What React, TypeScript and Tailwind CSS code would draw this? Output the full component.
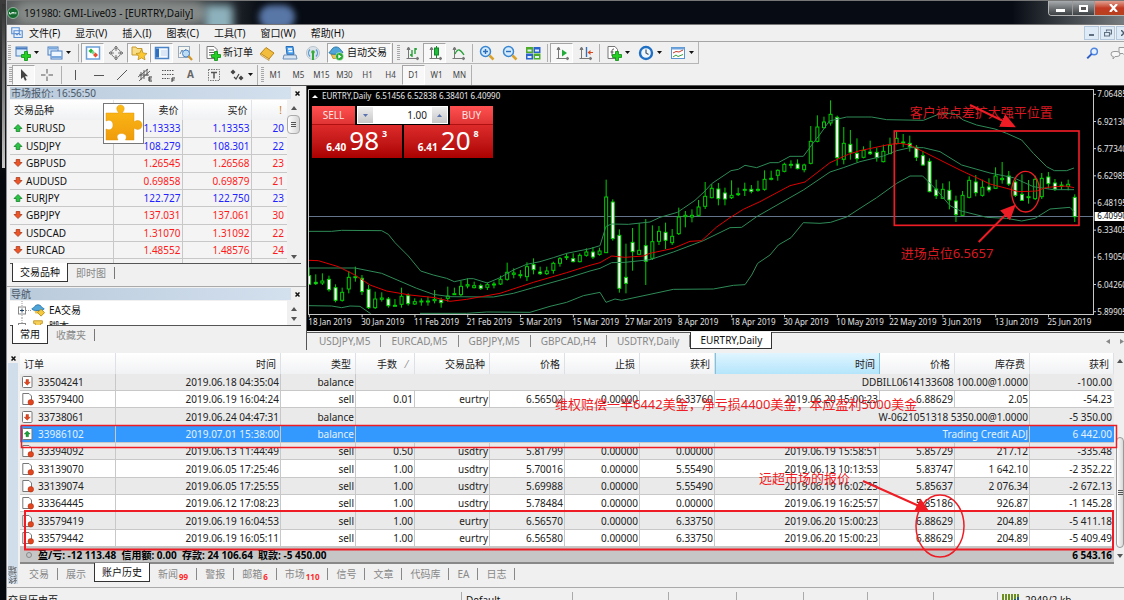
import React from 'react';
import clsx from 'clsx';

/* ---------- data ---------- */

const menuItems = ['文件(F)', '显示(V)', '插入(I)', '图表(C)', '工具(T)', '窗口(W)', '帮助(H)'];
const timeframes = ['M1', 'M5', 'M15', 'M30', 'H1', 'H4', 'D1', 'W1', 'MN'];
const chartTabs = ['USDJPY,M5', 'EURCAD,M5', 'GBPJPY,M5', 'GBPCAD,H4', 'USDTRY,Daily', 'EURTRY,Daily'];

const quotes = [
  { symbol: 'EURUSD', bid: '1.13333', ask: '1.13353', spread: 20, up: true },
  { symbol: 'USDJPY', bid: '108.279', ask: '108.301', spread: 22, up: true },
  { symbol: 'GBPUSD', bid: '1.26545', ask: '1.26568', spread: 23, up: false },
  { symbol: 'AUDUSD', bid: '0.69858', ask: '0.69879', spread: 21, up: false },
  { symbol: 'EURJPY', bid: '122.727', ask: '122.750', spread: 23, up: true },
  { symbol: 'GBPJPY', bid: '137.031', ask: '137.061', spread: 30, up: false },
  { symbol: 'USDCAD', bid: '1.31070', ask: '1.31092', spread: 22, up: false },
  { symbol: 'EURCAD', bid: '1.48552', ask: '1.48576', spread: 24, up: false },
];

type Order = {
  id: string;
  time: string;
  type: string;
  comment?: string;
  cells?: string[];
  profit: string;
  icon: 'out' | 'in' | 'sell';
};

const orders: Order[] = [
  { id: '33504241', time: '2019.06.18 04:35:04', type: 'balance', comment: 'DDBILL0614133608 100.00@1.0000', profit: '-100.00', icon: 'out' },
  { id: '33579400', time: '2019.06.19 16:04:24', type: 'sell', cells: ['0.01', 'eurtry', '6.56502', '0.00000', '6.33760', '2019.06.20 15:00:23', '6.88629', '2.05'], profit: '-54.23', icon: 'sell' },
  { id: '33738061', time: '2019.06.24 04:47:31', type: 'balance', comment: 'W-0621051318 5350.00@1.0000', profit: '-5 350.00', icon: 'out' },
  { id: '33986102', time: '2019.07.01 15:38:00', type: 'balance', comment: 'Trading Credit ADJ', profit: '6 442.00', icon: 'in' },
  { id: '33394092', time: '2019.06.13 11:44:49', type: 'sell', cells: ['0.50', 'usdtry', '5.81799', '0.00000', '0.00000', '2019.06.19 15:58:51', '5.85729', '217.12'], profit: '-335.48', icon: 'sell' },
  { id: '33139070', time: '2019.06.05 17:25:46', type: 'sell', cells: ['1.00', 'usdtry', '5.70016', '0.00000', '5.55490', '2019.06.13 10:13:53', '5.83747', '1 642.10'], profit: '-2 352.22', icon: 'sell' },
  { id: '33139074', time: '2019.06.05 17:25:55', type: 'sell', cells: ['1.00', 'usdtry', '5.69988', '0.00000', '5.55490', '2019.06.19 16:02:25', '5.85637', '2 076.34'], profit: '-2 672.13', icon: 'sell' },
  { id: '33364445', time: '2019.06.12 17:08:23', type: 'sell', cells: ['1.00', 'usdtry', '5.78484', '0.00000', '0.00000', '2019.06.19 16:25:57', '5.85186', '926.87'], profit: '-1 145.28', icon: 'sell' },
  { id: '33579419', time: '2019.06.19 16:04:53', type: 'sell', cells: ['1.00', 'eurtry', '6.56570', '0.00000', '6.33750', '2019.06.20 15:00:23', '6.88629', '204.89'], profit: '-5 411.18', icon: 'sell' },
  { id: '33579442', time: '2019.06.19 16:05:11', type: 'sell', cells: ['1.00', 'eurtry', '6.56580', '0.00000', '6.33750', '2019.06.20 15:00:23', '6.88629', '204.89'], profit: '-5 409.49', icon: 'sell' },
];

const terminalTabs = [
  { label: '交易' },
  { label: '展示' },
  { label: '账户历史', active: true },
  { label: '新闻', badge: '99' },
  { label: '警报' },
  { label: '邮箱', badge: '6' },
  { label: '市场', badge: '110' },
  { label: '信号' },
  { label: '文章' },
  { label: '代码库' },
  { label: 'EA' },
  { label: '日志' },
];

// high, low, body top, body bottom, bearish (chart units, 3 per pixel)
const candles: number[][] = [
  [548, 600, 572, 598, 1], [568, 600, 592, 596, 1], [565, 600, 588, 594, 0], [572, 620, 583, 614, 1],
  [598, 652, 608, 646, 1], [608, 650, 622, 646, 0], [558, 625, 577, 612, 0], [545, 590, 575, 578, 0],
  [570, 630, 580, 620, 1], [600, 672, 613, 668, 1], [620, 672, 642, 668, 0], [622, 650, 639, 643, 0],
  [636, 668, 642, 662, 1], [642, 665, 661, 664, 0], [608, 668, 634, 658, 0], [625, 662, 632, 656, 1],
  [640, 660, 650, 657, 0], [640, 662, 648, 651, 0], [635, 662, 648, 651, 0], [615, 655, 643, 647, 0],
  [638, 668, 645, 653, 1], [605, 650, 633, 640, 0], [608, 630, 626, 629, 0], [588, 634, 604, 629, 0],
  [580, 610, 599, 603, 0], [590, 610, 602, 608, 0], [596, 615, 602, 610, 1], [592, 615, 599, 607, 0],
  [590, 610, 597, 600, 0], [572, 600, 583, 597, 0], [533, 587, 562, 583, 0], [550, 580, 564, 568, 0],
  [555, 580, 569, 572, 0], [532, 588, 545, 575, 0], [520, 568, 539, 554, 1], [545, 570, 561, 566, 1],
  [545, 570, 558, 566, 0], [530, 566, 535, 556, 0], [516, 545, 521, 535, 0], [505, 525, 515, 518, 0],
  [505, 532, 521, 530, 1], [505, 532, 511, 530, 0], [490, 515, 501, 511, 0], [486, 522, 501, 516, 1],
  [488, 512, 498, 508, 0], [284, 504, 336, 503, 0], [343, 467, 351, 461, 1], [433, 623, 451, 610, 1],
  [476, 625, 577, 595, 1], [429, 557, 472, 500, 1], [415, 510, 496, 508, 0], [402, 600, 482, 529, 1],
  [421, 525, 470, 520, 0], [423, 480, 439, 469, 0], [413, 492, 442, 466, 1], [432, 480, 454, 473, 0],
  [368, 450, 396, 446, 0], [378, 427, 391, 395, 0], [373, 412, 391, 396, 0], [345, 395, 366, 391, 0],
  [291, 372, 334, 364, 0], [297, 340, 310, 338, 0], [294, 361, 312, 341, 1], [308, 361, 324, 342, 1],
  [286, 342, 331, 338, 0], [308, 333, 326, 329, 0], [293, 333, 313, 316, 0], [300, 325, 313, 319, 1],
  [287, 320, 313, 316, 0], [256, 317, 283, 313, 0], [257, 286, 280, 283, 0], [253, 287, 256, 271, 0],
  [233, 262, 238, 259, 0], [226, 250, 238, 241, 0], [223, 253, 237, 251, 1], [236, 262, 240, 254, 0],
  [123, 238, 169, 235, 0], [91, 172, 126, 169, 0], [95, 130, 111, 128, 0], [46, 122, 88, 114, 0],
  [92, 242, 97, 218, 1], [126, 238, 175, 223, 0], [135, 224, 178, 202, 1], [160, 232, 205, 221, 1],
  [184, 220, 196, 217, 0], [167, 210, 201, 206, 1], [188, 230, 202, 218, 1], [179, 232, 199, 230, 0],
  [158, 206, 181, 206, 0], [140, 178, 160, 176, 0], [147, 187, 171, 174, 0], [152, 200, 175, 185, 1],
  [180, 228, 187, 217, 1], [198, 243, 212, 240, 1], [220, 322, 229, 320, 1], [284, 342, 312, 332, 1],
  [295, 342, 313, 340, 0], [289, 373, 316, 345, 1], [332, 411, 348, 389, 1], [318, 393, 331, 391, 0],
  [274, 340, 286, 337, 0], [270, 334, 291, 323, 1], [284, 335, 307, 331, 0], [280, 322, 306, 315, 1],
  [247, 312, 273, 310, 0], [231, 296, 280, 284, 0], [258, 303, 273, 297, 1], [284, 336, 291, 331, 1],
  [268, 348, 328, 346, 1], [285, 356, 335, 338, 0], [272, 345, 283, 341, 0], [264, 342, 280, 335, 0],
  [261, 310, 276, 296, 1], [282, 318, 294, 312, 1], [290, 314, 300, 303, 0], [284, 316, 298, 304, 0],
  [328, 411, 337, 395, 1],
];

const upperBand =
  '27,439 95,439 125,436 245,437 265,448 285,473 325,513 362,558 400,570 440,580 463,590 505,581 520,581 562,594 600,578 640,555 680,538 720,530 760,518 800,505 870,491 900,482 918,424 935,417 985,418 1050,411 1080,397 1132,382 1150,370 1185,346 1215,318 1235,296 1293,257 1315,253 1335,241 1370,248 1410,233 1435,233 1470,214 1510,214 1535,180 1560,148 1588,108 1640,96 1715,96 1760,104 1870,106 1915,88 1960,84 1990,105 2030,120 2085,132 2120,145 2165,165 2200,205 2240,245 2263,257 2300,257 2322,249';
const middleBand =
  '27,549 165,549 245,565 350,610 400,628 450,635 580,636 640,625 700,608 800,580 870,558 900,550 935,533 975,532 1050,524 1120,501 1210,467 1290,428 1325,427 1370,395 1510,315 1590,261 1630,248 1680,230 1750,213 1790,197 1830,188 1870,188 1920,200 1985,240 2070,264 2140,278 2200,305 2260,314 2322,314';
const lowerBandLeft = '27,662 95,663 125,668 150,663 180,664 212,686';
const lowerBand =
  '360,685 500,685 560,681 690,682 750,664 800,652 850,632 900,622 918,652 945,642 965,646 1050,628 1120,613 1240,612 1300,601 1335,599 1355,570 1373,535 1410,510 1435,480 1473,458 1510,413 1560,415 1592,412 1640,396 1680,370 1730,338 1790,295 1830,273 1868,273 1910,315 1950,362 1980,377 2060,397 2120,400 2165,408 2205,400 2250,372 2310,367 2322,380';
const movingAverage =
  '27,526 55,527 115,545 165,570 210,600 260,618 330,630 405,638 450,649 500,643 600,625 700,592 800,563 870,541 900,533 935,513 975,517 1030,513 1050,505 1120,490 1170,469 1205,467 1250,426 1290,398 1330,373 1380,350 1470,302 1515,291 1590,233 1645,208 1680,197 1770,178 1800,175 1830,180 1880,205 1980,255 2070,297 2120,310 2155,320 2210,318 2240,307 2300,303 2322,308';

const priceLabels = ['7.06485', '6.92130', '6.77340', '6.62985', '6.48195', '6.33405', '6.19050', '6.04260', '5.89905'];
const dateLabels = [
  '18 Jan 2019', '30 Jan 2019', '11 Feb 2019', '21 Feb 2019', '5 Mar 2019', '15 Mar 2019', '27 Mar 2019', '8 Apr 2019',
  '18 Apr 2019', '30 Apr 2019', '10 May 2019', '22 May 2019', '3 Jun 2019', '13 Jun 2019', '25 Jun 2019',
];

/* ---------- small parts ---------- */

const Glyph = ({ children, size = 16 }: { children: React.ReactNode; size?: number }) => (
  <svg width={size} height={size} viewBox="0 0 16 16" fill="none" aria-hidden="true" className="shrink-0">
    {children}
  </svg>
);

const ToolButton = ({ label, pressed, children }: { label: string; pressed?: boolean; children: React.ReactNode }) => (
  <button
    type="button"
    aria-label={label}
    className={clsx(
      'flex h-5 w-[23px] shrink-0 items-center justify-center border text-[8px] text-[#444]',
      pressed ? 'border-t-[#a5a5a5] border-l-[#a5a5a5] border-r-white border-b-white bg-[#f8f8f8]' : 'border-transparent',
    )}
  >
    {children}
  </button>
);

const Caret = () => (
  <span className="flex h-5 w-[9px] shrink-0 items-center">
    <svg width="5" height="3" viewBox="0 0 5 3"><path d="M0 0h5L2.5 3z" fill="#111" /></svg>
  </span>
);

const Separator = () => (
  <span className="flex w-[6px] shrink-0 justify-center"><span className="h-[18px] w-px bg-[#b0b0b0]" /></span>
);

const Grip = () => (
  <span className="flex w-1 shrink-0 justify-center">
    <svg width="3" height="16" viewBox="0 0 3 16">
      <path d="M1.5 0v16" stroke="#a8a8a8" strokeWidth="3" strokeDasharray="1 1" />
    </svg>
  </span>
);

const Plus = () => <path d="M9.500 6.500h3v3h3v3h-3v3h-3v-3h-3v-3h3z" fill="#22cf22" stroke="#0a8a12" strokeWidth=".8" />;
const Axes = () => <path d="M4.500 3v10.500M2.500 13.500h12M4.500 2l-1.500 2.500h3zM15 13.500l-2-1.500v3z" stroke="#777" strokeWidth="1" fill="#777" />;

const ArrowMark = ({ up }: { up: boolean }) => (
  <svg width="10" height="10" viewBox="0 0 10 10" aria-hidden="true" className="shrink-0">
    {up ? (
      <path d="M5 1.500l4 4H6.800V8.500H3.200V5.500H1z" fill="#2cc444" stroke="#15802a" strokeWidth=".8" />
    ) : (
      <path d="M5 8.500L1 4.500h2.200V1.500h3.600V4.500H9z" fill="#ee5426" stroke="#a83a1a" strokeWidth=".8" />
    )}
  </svg>
);

const OrderIcon = ({ kind }: { kind: Order['icon'] }) => (
  <svg width="12" height="14" viewBox="0 0 12 14" aria-hidden="true" className="shrink-0">
    {kind === 'sell' ? (
      <>
        <path d="M.8 1.500h6.200l2.500 2.500v8.500H.8z" fill="#fff" stroke="#777" />
        <circle cx="8.800" cy="10.300" r="2.800" fill="#e2441d" stroke="#a52c10" strokeWidth=".5" />
      </>
    ) : (
      <>
        <rect x=".5" y="1.500" width="9.500" height="11" rx="1" fill="#fff" stroke="#777" />
        {kind === 'out' ? (
          <path d="M5.200 10.200L2.200 7.200H4V4.500h2.500v2.700h1.800z" fill="#e2441d" stroke="#982c10" strokeWidth=".4" />
        ) : (
          <path d="M5.200 4l3 3H6.500v2.700H4V7H2.200z" fill="#1ca03a" stroke="#0e6a22" strokeWidth=".4" />
        )}
      </>
    )}
  </svg>
);

const CloseMark = () => (
  <svg width="5" height="5" viewBox="0 0 5 5"><path d="M.5.5l4 4M4.500.5l-4 4" stroke="#111" strokeWidth="1.500" /></svg>
);

const PaneTitle = ({ children }: { children: React.ReactNode }) => (
  <div className="flex h-[14px] items-center pr-[3px] pl-[3px]">
    <h2 className="h-3 flex-1 bg-gradient-to-r from-[#b9cadb] to-[#d3e0ee] px-px text-[10px] leading-3 text-[#4a5766]">{children}</h2>
    <button type="button" aria-label="关闭" className="flex h-3 w-3 items-center justify-center"><CloseMark /></button>
  </div>
);

const ScrollArrow = ({ down }: { down?: boolean }) => (
  <svg width="6" height="4" viewBox="0 0 6 4" className="mx-auto block"><path d={down ? 'M0 0h6L3 4z' : 'M0 4h6L3 0z'} fill="#555" /></svg>
);

/* ---------- window chrome ---------- */

const TitleBar = () => (
  <header className="relative flex h-[25px] shrink-0 items-center overflow-hidden border-t border-b border-t-[#777] border-b-[#777] bg-[#070c14]">
    <span className="absolute top-0 left-0 h-6 w-64 bg-gradient-to-r from-[#5c6060] from-60% to-transparent" />
    <span className="absolute top-0 left-2 h-6 w-48 rounded-full bg-[#868b89] blur-[5px]" />
    <span className="absolute top-1 left-[198px] h-7 w-7 rounded bg-[#8eb2bd] blur-[4px]" />
    <span className="absolute top-1 left-[252px] h-6 w-9 rounded-full bg-[#5876a6] blur-[3px]" />
    <span className="absolute top-0 right-0 h-6 w-28 bg-gradient-to-r from-transparent to-[#777c80]" />
    <svg width="12" height="12" viewBox="0 0 12 12" className="relative shrink-0">
      <circle cx="6" cy="6" r="5.500" fill="#14692f" stroke="#b9d6bf" strokeWidth=".7" />
      <path d="M2.500 5v2h1.500V6M5 7.200V5l1 1.200L7 5v2.200M8.800 5v2.200" stroke="#fff" strokeWidth=".8" fill="none" />
    </svg>
    <h1 className="relative ml-[5px] text-[10px] leading-4 text-[#0c0c0c]">191980: GMI-Live03 - [EURTRY,Daily]</h1>
    <div className="absolute top-0 right-0 flex h-[15px] overflow-hidden rounded-bl border-b border-l border-[#b5b5b5]">
      <button type="button" aria-label="最小化" className="flex w-6 items-end justify-center border-r border-[#999] bg-gradient-to-b from-[#a9acae] to-[#3e4144] pb-[3px]">
        <span className="h-[3px] w-[9px] bg-white" />
      </button>
      <button type="button" aria-label="最大化" className="flex w-[22px] items-center justify-center border-r border-[#999] bg-gradient-to-b from-[#a9acae] to-[#3e4144]">
        <span className="h-[7px] w-[9px] border-2 border-white bg-[#555]" />
      </button>
      <button type="button" aria-label="关闭窗口" className="flex w-[29px] items-center justify-center bg-gradient-to-b from-[#e0a092] via-[#c23a22] to-[#b8401f] pl-2">
        <svg width="9" height="8" viewBox="0 0 9 8"><path d="M1 0l7 8M8 0L1 8" stroke="#fff" strokeWidth="2.200" /></svg>
      </button>
    </div>
  </header>
);

const MenuBar = () => (
  <nav className="flex h-[17px] shrink-0 items-center border-b border-[#a5a5a5] bg-[#f0f0f0] pl-1 text-[10px] text-[#111]">
    <Glyph size={12}>
      <path d="M1 1h10v8H1zM4 5h11v9H4z" fill="#e8f2ff" stroke="#5a8fd0" strokeWidth="1.500" />
      <path d="M6 8l2 3 2-3 2 3 1-2" stroke="#4a7ac0" />
    </Glyph>
    <ul className="ml-[6px] flex gap-[15px]">
      {menuItems.map((item) => (
        <li key={item}><button type="button" className="block leading-4">{item}</button></li>
      ))}
    </ul>
    <div className="ml-auto flex text-[#4b5b6b]">
      <button type="button" aria-label="最小化图表" className="mr-px flex h-[14px] w-[15px] items-end justify-center border border-[#b3c8dc] bg-[#deebf7] pb-[3px]">
        <span className="h-0.5 w-[5px] bg-[#5f6f80]" />
      </button>
      <button type="button" aria-label="还原图表" className="mr-px flex h-[14px] w-[15px] items-center justify-center border border-[#b3c8dc] bg-[#deebf7]">
        <svg width="8" height="8" viewBox="0 0 8 8" fill="none" stroke="#5f6f80"><path d="M2.500 2.500v-1.500h5v4H6M.5 3.500h5v3.500h-5z" strokeWidth="1.200" /></svg>
      </button>
      <button type="button" aria-label="关闭图表" className="flex h-[14px] w-2 items-center overflow-hidden border border-r-0 border-[#b3c8dc] bg-[#deebf7] pl-1">
        <svg width="6" height="6" viewBox="0 0 6 6" className="shrink-0"><path d="M0 0l6 6M6 0L0 6" stroke="#4b5b6b" strokeWidth="1.500" /></svg>
      </button>
    </div>
  </nav>
);

const MainToolbar = () => (
  <div className="flex h-[22px] shrink-0 items-center bg-[#f0f0f0]">
    <div className="flex h-[22px] items-center border-b border-r border-[#b5b5b5]">
      <Grip />
      <ToolButton label="新图表">
        <Glyph><rect x="1" y="2" width="11" height="9" fill="#dcebfa" stroke="#4a7ec0" /><path d="M1 3.500h11" stroke="#4a7ec0" strokeWidth="2" /><Plus /></Glyph>
      </ToolButton>
      <Caret />
      <ToolButton label="配置文件">
        <Glyph><rect x="1" y="2" width="10" height="8" fill="#dcebfa" stroke="#4a7ec0" /><rect x="4" y="6" width="11" height="8" fill="#eef6ff" stroke="#4a7ec0" /><path d="M2 3.500h8M4 12h11" stroke="#7aa8dd" strokeWidth="2" /></Glyph>
      </ToolButton>
      <Caret />
      <Separator />
      <ToolButton label="市场报价" pressed>
        <Glyph><rect x="1.500" y="2" width="13" height="12" fill="#fff" stroke="#6a9fd8" strokeWidth="1.500" /><path d="M6 3.500l2.500 2.500L6 8.500 3.500 6z" fill="#20b838" /><path d="M8 5.500l2 2-2 2-2-2z" fill="#7fd08a" /><path d="M10.500 7.500L13 10l-2.500 2.500L8 10z" fill="#e94b2b" /></Glyph>
      </ToolButton>
      <ToolButton label="数据窗口">
        <Glyph><circle cx="8" cy="8" r="4.500" stroke="#777" /><path d="M8 1v5M8 10v5M1 8h5M10 8h5M6.500 3L8 1l1.500 2M6.500 13L8 15l1.500-2M3 6.500L1 8l2 1.500M13 6.500L15 8l-2 1.500" stroke="#777" /></Glyph>
      </ToolButton>
      <ToolButton label="导航" pressed>
        <Glyph><path d="M1 2h4l1 1.500h5V10H1z" fill="#f8dd84" stroke="#c99a2e" /><path d="M10.500 4.500l1.700 3.500 3.800.5-2.800 2.600.8 3.700-3.500-1.900L7 14.800l.8-3.700L5 8.500 8.800 8z" fill="#fbc832" stroke="#b98612" strokeWidth=".7" /></Glyph>
      </ToolButton>
      <ToolButton label="终端" pressed>
        <Glyph><rect x="1.500" y="2.500" width="13" height="11" fill="#f4f9ff" stroke="#4a84c8" strokeWidth="1.500" /><path d="M2 3.500h3v9H2z" fill="#2f6fc0" /><path d="M7 6h6M7 8h6M7 10h6" stroke="#c0d4ec" /></Glyph>
      </ToolButton>
      <ToolButton label="策略测试">
        <Glyph><rect x="1.500" y="1.500" width="11" height="11" fill="#f4f4f0" stroke="#9ab" /><path d="M3 9l2-4 2 3 2-4" stroke="#68a" /><circle cx="9" cy="8.500" r="3.500" fill="#bcdcf4" stroke="#4a84c8" /><path d="M11.500 11l3.500 4" stroke="#d2962a" strokeWidth="2.200" /></Glyph>
      </ToolButton>
      <Separator />
      <button type="button" className="flex h-5 w-[53px] shrink-0 items-center gap-[2px] pl-[3px] text-[10px] whitespace-nowrap text-[#111]">
        <Glyph><path d="M2 1.500h7l3 3v9H2z" fill="#fff" stroke="#777" /><path d="M4 5h5M4 7.500h5M4 10h3" stroke="#666" /><Plus /></Glyph>
        新订单
      </button>
      <ToolButton label="编辑器">
        <Glyph><path d="M1.500 8.500L7 2.500l8 5.500-5 6z" fill="#f2bc3c" stroke="#b8841c" /><path d="M1.500 8.500l8.500 5.500v1.500L1.500 10z" fill="#fbe6a8" stroke="#b8841c" strokeWidth=".7" /></Glyph>
      </ToolButton>
      <ToolButton label="全屏">
        <Glyph><path d="M4 1.500h7l1 8H5z" fill="#4ba2ec" stroke="#2a6cb8" /><path d="M6 4h4M6.500 6.500h4" stroke="#fff" strokeWidth="1.300" /><path d="M2 10h12l1 4H1z" fill="#d7e4f2" stroke="#6a8fb8" /></Glyph>
      </ToolButton>
      <ToolButton label="信号">
        <Glyph><circle cx="8" cy="8" r="6.500" fill="#dbe3e8" stroke="#b8c4cc" /><path d="M5 4.500a5 5 0 000 7M11 4.500a5 5 0 010 7" stroke="#5a9bd4" strokeWidth="1.300" /><path d="M8 6v9" stroke="#35ab3c" strokeWidth="2" /><circle cx="8" cy="7" r="1.800" fill="#35ab3c" /></Glyph>
      </ToolButton>
      <button type="button" className="ml-[3px] flex h-5 w-16 shrink-0 items-center gap-[3px] border border-t-[#a5a5a5] border-l-[#a5a5a5] border-r-white border-b-white bg-[#f8f8f8] text-[10px] whitespace-nowrap text-[#111]">
        <Glyph><path d="M3 9h9l-1 4.500H5z" fill="#eec24c" stroke="#a98220" strokeWidth=".7" /><path d="M1 7.500C3 7 3.500 2 8 2s5 4.500 7 5c0 3-14 3-14 .5z" fill="#4fa4d8" stroke="#2a75a8" /><circle cx="11.500" cy="11.500" r="4" fill="#25ab30" stroke="#fff" strokeWidth=".5" /><path d="M10.300 9.500l3.200 2-3.200 2z" fill="#fff" /></Glyph>
        自动交易
      </button>
      <span className="ml-px mr-[3px] h-5 w-px bg-[#a0a0a0]" />
      <Grip />
      <ToolButton label="柱状图"><Glyph><Axes /><path d="M8 5v7M6 10h2M11 3v6M11 4h2" stroke="#1a9a2a" strokeWidth="1.300" /></Glyph></ToolButton>
      <ToolButton label="蜡烛图" pressed><Glyph><Axes /><path d="M9.500 1v12" stroke="#12852a" /><rect x="7.500" y="3" width="4" height="7" fill="#22ba3a" stroke="#12852a" /></Glyph></ToolButton>
      <ToolButton label="折线图"><Glyph><Axes /><path d="M5 9c3-6 5-5 9 1" stroke="#2aa03a" strokeWidth="1.300" /></Glyph></ToolButton>
      <Separator />
      <ToolButton label="放大"><Glyph><circle cx="6.500" cy="6.500" r="5" fill="#d4ebff" stroke="#3b86d0" strokeWidth="1.500" /><path d="M4 6.500h5M6.500 4v5" stroke="#2c6cb8" strokeWidth="1.400" /><path d="M10.500 10.500l4 4" stroke="#d9a22c" strokeWidth="2.500" /></Glyph></ToolButton>
      <ToolButton label="缩小"><Glyph><circle cx="6.500" cy="6.500" r="5" fill="#d4ebff" stroke="#3b86d0" strokeWidth="1.500" /><path d="M4 6.500h5" stroke="#2c6cb8" strokeWidth="1.400" /><path d="M10.500 10.500l4 4" stroke="#d9a22c" strokeWidth="2.500" /></Glyph></ToolButton>
      <ToolButton label="平铺窗口">
        <Glyph><rect x="1" y="2" width="7" height="6" fill="#4cab28" /><rect x="8.500" y="2" width="7" height="6" fill="#2c62cc" /><rect x="1" y="8.500" width="7" height="6" fill="#2c62cc" /><rect x="8.500" y="8.500" width="7" height="6" fill="#4cab28" /><path d="M2.500 5.500h4M10 5.500h4M2.500 12h4M10 12h4" stroke="#e4f0ff" strokeWidth="2" /></Glyph>
      </ToolButton>
      <Separator />
      <ToolButton label="自动滚动" pressed><Glyph><Axes /><path d="M8 4.500l5 3.500-5 3.500z" fill="#22ab38" /></Glyph></ToolButton>
      <ToolButton label="图表平移"><Glyph><Axes /><path d="M9.500 2v10" stroke="#336fb8" strokeWidth="1.400" /><path d="M10.500 7.500l3-2.500v5z" fill="#d8481e" /><path d="M13 7.500h3" stroke="#d8481e" /></Glyph></ToolButton>
      <Separator />
      <ToolButton label="指标"><Glyph><path d="M2 1.500h7l2.500 3v9H2z" fill="#fff" stroke="#777" /><path d="M8 4c-2 0-2 1-2 3v4M4.500 7h3" stroke="#555" /><Plus /></Glyph></ToolButton>
      <Caret />
      <ToolButton label="周期"><Glyph><circle cx="8" cy="8" r="6" fill="#eef6ff" stroke="#1f6fc4" strokeWidth="2.400" /><path d="M8 4.500V8l2.500 1.500" stroke="#456" strokeWidth="1.200" /></Glyph></ToolButton>
      <Caret />
      <ToolButton label="模板"><Glyph><rect x="1.500" y="2.500" width="13" height="11" fill="#fff" stroke="#5a94d0" /><path d="M1.500 3.500h13" stroke="#6fa4dc" strokeWidth="2" /><path d="M3 8l3-1.500 3 .5 4-2" stroke="#c33a2a" /><path d="M3 12l3-2 2 1.500 5-2" stroke="#35a03a" /></Glyph></ToolButton>
      <Caret />
    </div>
    <div className="ml-auto flex items-center gap-[11px]">
      <button type="button" aria-label="搜索"><Glyph size={13}><circle cx="10" cy="5.500" r="4" fill="#e6f0ff" stroke="#4f86e0" strokeWidth="1.800" /><path d="M7 8.500L1.500 14" stroke="#2f5fc4" strokeWidth="2.500" /></Glyph></button>
      <button type="button" aria-label="聊天" className="w-[14px] overflow-hidden">
        <svg width="20" height="14" viewBox="0 0 20 14" fill="#f7f7f7" stroke="#999"><path d="M9 1.500h8q3 0 3 3t-3 3h-2l1 3-3-3H9z" /><path d="M4 5.500h3q3 0 3 2.500t-3 2.500H5l-2 2.500.3-2.500Q1 10.500 1 8t3-2.500z" /></svg>
      </button>
    </div>
  </div>
);

const DrawingToolbar = () => (
  <div className="flex h-[22px] shrink-0 items-center border-b border-[#555] bg-[#f0f0f0] pl-px">
    <Grip />
    <ToolButton label="光标" pressed><Glyph><path d="M5 2v10l2.300-2 1.700 3.700 1.700-.8L9 9.200h3z" fill="#444" /></Glyph></ToolButton>
    <ToolButton label="十字准线"><Glyph><path d="M8 2v4.500M8 9.500V14M2 8h4.500M9.500 8H14" stroke="#555" /></Glyph></ToolButton>
    <Separator />
    <ToolButton label="垂直线"><Glyph><path d="M7.500 3v10" stroke="#555" /></Glyph></ToolButton>
    <ToolButton label="水平线"><Glyph><path d="M3 8.500h10" stroke="#555" /></Glyph></ToolButton>
    <ToolButton label="趋势线"><Glyph><path d="M3 13L13 3" stroke="#555" /></Glyph></ToolButton>
    <ToolButton label="等距通道"><Glyph><path d="M1 10l10-8M2 14L13 4M4 5v8M7 3v9M10 2v7M2 8h10" stroke="#555" strokeWidth=".9" /><path d="M15 10h-3v4h3M12 12h2.500" stroke="#333" /></Glyph></ToolButton>
    <ToolButton label="斐波那契"><Glyph><path d="M2 3.500h12M2 7.500h12M2 11.500h8" stroke="#555" strokeDasharray="1.500 1" /><path d="M12 15v-4h3M12 13h2.500" stroke="#333" /></Glyph></ToolButton>
    <ToolButton label="文字"><span className="text-[10px] font-bold text-[#666]">A</span></ToolButton>
    <ToolButton label="文字标签"><Glyph><rect x="2.500" y="2.500" width="11" height="11" stroke="#777" strokeDasharray="1.500 1" /><path d="M5 5.500h6M8 5.500v6" stroke="#555" strokeWidth="1.500" /></Glyph></ToolButton>
    <ToolButton label="箭头"><Glyph><path d="M4 2.500l2.500 2.500L4 7.500 1.500 5zM12 8.500l2.500 2.500L12 13.500 9.500 11z" fill="#444" /><path d="M5 10l2 2 3-5" stroke="#444" strokeWidth="1.200" /></Glyph></ToolButton>
    <Caret />
    <span className="mr-0.5 h-5 w-px bg-[#b0b0b0]" />
    <Grip />
    {timeframes.map((tf) => (
      <ToolButton key={tf} label={tf} pressed={tf === 'D1'}>{tf}</ToolButton>
    ))}
    <span className="h-5 w-px bg-[#b0b0b0]" />
  </div>
);

/* ---------- left side ---------- */

const PaneTabs = ({ tabs }: { tabs: string[] }) => (
  <div role="tablist" className="ml-[3px] flex h-[18px] text-[10px] leading-4">
    {tabs.map((tab, i) =>
      i === 0 ? (
        <button key={tab} type="button" role="tab" aria-selected="true" className="ml-0.5 -mt-px border border-t-0 border-[#333] bg-white px-[7px] text-[#111]">{tab}</button>
      ) : (
        <button key={tab} type="button" role="tab" aria-selected="false" className="mt-[3px] h-3 border-r border-[#777] px-2 leading-3 text-[#888]">{tab}</button>
      ),
    )}
  </div>
);

const MarketWatch = () => (
  <section className="relative">
    <PaneTitle>市场报价: 16:56:50</PaneTitle>
    <div className="mr-[5px] ml-[3px] flex h-[164px] overflow-hidden border-b border-[#555] bg-[#f4f4f4]">
      <table className="flex-1 table-fixed border-collapse text-[10px] leading-[14px]">
        <colgroup>
          <col />
          <col className="w-[69px]" />
          <col className="w-[69px]" />
          <col className="w-9" />
        </colgroup>
        <thead>
          <tr className="h-5 bg-gradient-to-b from-white to-[#f0f1f3] text-[#222]">
            <th className="border-r border-[#e0e3e8] p-0 pl-1 text-left font-normal">交易品种</th>
            <th className="border-r border-[#e0e3e8] p-0 pr-[3px] text-right font-normal">卖价</th>
            <th className="border-r border-[#e0e3e8] p-0 pr-[3px] text-right font-normal">买价</th>
            <th className="p-0 pr-[5px] text-right font-normal text-[#c8780a]">!</th>
          </tr>
        </thead>
        <tbody>
          {quotes.map((q) => (
            <tr key={q.symbol} className={clsx('h-[17px] border-b border-[#c8c8c8] [&:nth-child(3n)]:h-[18px]', q.up ? 'text-[#2222ff]' : 'text-[#ff1a1a]')}>
              <td className="border-r border-[#c8c8c8] p-0 pl-[3px] text-[#111]">
                <span className="flex items-center gap-[3px]"><ArrowMark up={q.up} />{q.symbol}</span>
              </td>
              <td className="border-r border-[#c8c8c8] p-0 pr-px text-right">{q.bid}</td>
              <td className="border-r border-[#c8c8c8] p-0 pr-px text-right">{q.ask}</td>
              <td className="p-0 pr-[3px] text-right">{q.spread}</td>
            </tr>
          ))}
          <tr className="h-[17px]">
            <td className="border-r border-[#c8c8c8] p-0" />
            <td className="border-r border-[#c8c8c8] p-0" />
            <td className="border-r border-[#c8c8c8] p-0" />
            <td className="p-0" />
          </tr>
        </tbody>
      </table>
      <div className="flex w-[14px] flex-col bg-[#f0f0f0] pt-[6px] pb-1">
        <ScrollArrow />
        <div className="mt-[5px] flex h-[19px] w-[13px] flex-col items-center justify-center gap-px rounded-sm border border-[#aaa] bg-gradient-to-r from-white to-[#d5d5d5]">
          <span className="h-px w-[5px] bg-[#555]" />
          <span className="h-px w-[5px] bg-[#555]" />
          <span className="h-px w-[5px] bg-[#555]" />
        </div>
        <div className="mt-auto"><ScrollArrow down /></div>
      </div>
    </div>
    <PaneTabs tabs={['交易品种', '即时图']} />
    {/* floating add-on badge */}
    <div className="absolute top-[17px] left-24 h-[41px] w-[41px] border border-[#777] bg-white">
      <svg width="39" height="39" viewBox="0 0 39 39">
        <defs>
          <linearGradient id="puzzle" x1="0" y1="0" x2="0" y2="1">
            <stop offset="0" stopColor="#fcbb16" />
            <stop offset="1" stopColor="#f09c0c" />
          </linearGradient>
        </defs>
        <path d="M2 9h13c-4-4-2-8 1.500-8s5.500 4 1.500 8h12v9c4-3 8-1 8 3s-4 6-8 3v12h-8.500c2-4 0-6.500-4-6.500s-5.500 2.500-3.500 6.500H2V25c4 2 7 0 7-4s-3-6-7-4z" fill="url(#puzzle)" stroke="#e0960c" strokeWidth=".5" />
      </svg>
    </div>
  </section>
);

const Navigator = () => (
  <section className="mt-1 border-t border-[#aaa]">
    <PaneTitle>导航</PaneTitle>
    <div className="mr-[5px] ml-[3px] flex h-[25px] overflow-hidden border-b border-[#555] bg-white text-[10px] leading-4 text-[#111]">
      <ul className="flex-1 pl-2">
        <li className="flex h-[17px] items-center">
          <svg width="13" height="17" viewBox="0 0 13 17" fill="none"><path d="M4 0v17M8 9.500h5" stroke="#999" strokeDasharray="1 1" /><rect x=".5" y="6" width="7" height="7" fill="#fff" stroke="#888" /><path d="M2 9.500h4M4 7.500v4" stroke="#246" /></svg>
          <Glyph size={14}><path d="M1 6.500C4 6 4 2 8 2s4 4 7 4.500c0 3-14 3-14 0z" fill="#4fa4d8" stroke="#2a75a8" /><path d="M4 9h6l-1 3H5z" fill="#eec24c" /><path d="M11.500 7l4 4-4 4-4-4z" fill="#f5c93c" stroke="#b08a1c" /></Glyph>
          <span className="ml-1">EA交易</span>
        </li>
        <li className="flex h-4 items-center">
          <svg width="13" height="16" viewBox="0 0 13 16" fill="none"><path d="M4 0v6" stroke="#999" strokeDasharray="1 1" /><rect x=".5" y="5.500" width="7" height="7" fill="#fff" stroke="#888" /></svg>
          <Glyph size={14}><path d="M3 2h10v3h-2v8H5V5H3z" fill="#f5cf58" stroke="#c29624" /></Glyph>
          <span className="ml-1">脚本</span>
        </li>
      </ul>
      <div className="flex w-[14px] flex-col justify-between bg-[#f0f0f0] pt-[6px] pb-1"><ScrollArrow /><ScrollArrow down /></div>
    </div>
    <PaneTabs tabs={['常用', '收藏夹']} />
  </section>
);

/* ---------- chart ---------- */

const PriceChart = () => (
  <svg viewBox="24 12 2448 726" className="block w-full" fontSize="24" fill="none" role="img" aria-label="EURTRY 日线图">
    <defs>
      <clipPath id="plot"><rect x="27" y="15" width="2352" height="672" /></clipPath>
      <marker id="chartArrow" markerUnits="userSpaceOnUse" markerWidth="48" markerHeight="42" refX="24" refY="21" orient="auto">
        <path d="M0 0l46 21L0 42z" fill="#ee1c24" />
      </marker>
    </defs>
    <path d="M25.500 687V13.500H2379M2380.500 12V688.500M24 688.500H2382" stroke="#c8c8c8" strokeWidth="3" />
    <g clipPath="url(#plot)">
      <path d="M27 394.500h2352" stroke="#64748b" strokeWidth="3" />
      {candles.map(([high, low, top, bottom, bear], i) => {
        const x = 27.5 + 19.8 * i;
        return (
          <g key={i} stroke="#00d000" strokeWidth="3">
            <path d={`M${x} ${high}V${top}M${x} ${bottom}V${low}`} />
            <rect x={x - 4.5} y={top} width="9" height={bottom - top} fill={bear ? '#fff' : '#000'} />
          </g>
        );
      })}
      <g stroke="#2e8b57" strokeWidth="3">
        <polyline points={upperBand} />
        <polyline points={middleBand} />
        <polyline points={lowerBandLeft} />
        <polyline points={lowerBand} />
      </g>
      <polyline points={movingAverage} stroke="#dc0000" strokeWidth="3" />
    </g>
    <g fill="#e4e4e4">
      {priceLabels.map((label, i) => (
        <g key={label}>
          <path d={`M2382 ${28 + i * 81.5}h6`} stroke="#c8c8c8" strokeWidth="3" />
          <text x="2392" y={37 + i * 81.5}>{label}</text>
        </g>
      ))}
      {dateLabels.map((label, i) => (
        <g key={label}>
          <path d={`M${28 + i * 158.4} 690v7`} stroke="#c8c8c8" strokeWidth="3" />
          <text x={25 + i * 158.4} y="719">{label}</text>
        </g>
      ))}
    </g>
    <rect x="2384" y="381" width="90" height="27" fill="#fff" />
    <text x="2392" y="403" fill="#000">6.40990</text>
    <g fill="#d81820" fontSize="39">
      <text x="1829" y="95">客户被点差扩大强平位置</text>
      <text x="1802" y="519">进场点位6.5657</text>
    </g>
    <g stroke="#ee1c24" strokeWidth="5">
      <rect x="1783" y="138" width="554" height="283" />
      <ellipse cx="2177" cy="320" rx="42" ry="61" strokeWidth="4" />
      <path d="M2010 60L2128 117" strokeWidth="6" markerEnd="url(#chartArrow)" />
      <path d="M2036 471L2132 374" strokeWidth="6" markerEnd="url(#chartArrow)" />
    </g>
  </svg>
);

const PriceButton = ({ base, big, sup, side }: { base: string; big: string; sup: string; side: string }) => (
  <button
    type="button"
    aria-label={`${side} ${base}${big}${sup}`}
    className="flex h-[33px] flex-1 justify-center gap-[3px] bg-gradient-to-b from-[#dd2a2a] to-[#aa0000] text-white"
  >
    <span className="pt-[15px] text-[10px] leading-[14px] font-bold">{base}</span>
    <span className="text-[26px] leading-[30px]">{big}</span>
    <span className="pt-[3px] text-[9px] leading-3 font-bold">{sup}</span>
  </button>
);

const OneClickTrading = () => (
  <div className="absolute top-5 left-[5px] w-[181px]">
    <div className="flex h-[19px] gap-0.5">
      <button type="button" className="w-[43px] border-b border-[#b01010] bg-gradient-to-b from-[#ff5050] to-[#e03434] text-[10px] leading-[18px] text-[#ffe4e4]">SELL</button>
      <div className="flex h-[18px] flex-1 bg-white">
        <button type="button" aria-label="减少手数" className="flex w-[17px] items-center justify-center border border-white bg-gradient-to-b from-[#eee] to-[#c8c8c8]">
          <svg width="5" height="3" viewBox="0 0 5 3"><path d="M0 0h5L2.500 3z" fill="#5a72b0" /></svg>
        </button>
        <input aria-label="手数" defaultValue="1.00" className="w-0 flex-1 bg-white pr-1 text-right text-[10px] text-[#222]" />
        <button type="button" aria-label="增加手数" className="flex w-[17px] items-center justify-center border border-white bg-gradient-to-b from-[#eee] to-[#c8c8c8]">
          <svg width="5" height="3" viewBox="0 0 5 3"><path d="M0 3h5L2.500 0z" fill="#5a72b0" /></svg>
        </button>
      </div>
      <button type="button" className="w-[43px] border-b border-[#b01010] bg-gradient-to-b from-[#ff5050] to-[#e03434] text-[10px] leading-[18px] text-[#ffe4e4]">BUY</button>
    </div>
    <div className="flex gap-0.5">
      <PriceButton side="卖出" base="6.40" big="98" sup="3" />
      <PriceButton side="买入" base="6.41" big="20" sup="8" />
    </div>
  </div>
);

const ChartArea = () => (
  <section className="flex min-w-0 flex-1 flex-col border-l border-[#555]">
    <div className="relative bg-black pt-[3px] pl-px">
      <PriceChart />
      <p className="absolute top-1 left-[5px] flex items-center gap-1 text-[8px] leading-3 whitespace-pre text-[#e8e8e8]">
        <svg width="6" height="3" viewBox="0 0 6 3"><path d="M0 3h6L3 0z" fill="#fff" /></svg>
        {'EURTRY,Daily  6.51456 6.52838 6.38401 6.40990'}
      </p>
      <OneClickTrading />
    </div>
    <div role="tablist" className="mt-px flex h-[18px] border-t border-[#555] pl-0.5 text-[10px]">
      {chartTabs.map((tab) =>
        tab === 'EURTRY,Daily' ? (
          <button key={tab} type="button" role="tab" aria-selected="true" className="-mt-px h-[17px] border border-t-0 border-[#333] bg-white px-[9px] leading-4 text-[#111]">{tab}</button>
        ) : (
          <button key={tab} type="button" role="tab" aria-selected="false" className="mt-0.5 h-3 border-r border-[#888] px-[10px] leading-3 text-[#888]">{tab}</button>
        ),
      )}
      <div className="ml-auto flex items-center gap-[10px]">
        <svg width="4" height="5" viewBox="0 0 4 5"><path d="M4 0v5L0 2.500z" fill="#888" /></svg>
        <svg width="4" height="5" viewBox="0 0 4 5"><path d="M0 0v5l4-2.500z" fill="#888" /></svg>
      </div>
    </div>
  </section>
);

/* ---------- terminal ---------- */

const headerCell = 'border-r border-[#dde1e6] p-0 pr-1 text-right font-normal';
const bodyCell = 'border-r border-[#c8c8c8] p-0 pr-px text-right';

const HistoryTable = () => (
  <table className="w-full table-fixed border-separate border-spacing-0 text-[10px] leading-[14px] text-[#222]">
    <colgroup>
      <col className="w-24" />
      <col className="w-[165px]" />
      <col className="w-[75px]" />
      <col className="w-[59px]" />
      <col className="w-[75px]" />
      <col className="w-[75px]" />
      <col className="w-[75px]" />
      <col className="w-[75px]" />
      <col className="w-[165px]" />
      <col className="w-[75px]" />
      <col className="w-[75px]" />
      <col />
    </colgroup>
    <thead>
      <tr className="h-[21px] bg-gradient-to-b from-white to-[#f1f2f4]">
        <th className="border-r border-[#dde1e6] p-0 pl-1 text-left font-normal">订单</th>
        <th className={headerCell}>时间</th>
        <th className={headerCell}>类型</th>
        <th className={clsx(headerCell, 'whitespace-pre')}>手数 <span className="ml-1 text-[#888]"> ⁄ </span></th>
        <th className={headerCell}>交易品种</th>
        <th className={headerCell}>价格</th>
        <th className={headerCell}>止损</th>
        <th className={headerCell}>获利</th>
        <th className="border-x border-[#7cc4e0] bg-gradient-to-b from-[#e0f5ff] to-[#b4e5fb] p-0 pr-1 text-right font-normal">时间</th>
        <th className={headerCell}>价格</th>
        <th className={headerCell}>库存费</th>
        <th className={headerCell}>获利</th>
      </tr>
    </thead>
    <tbody className="[&_td]:border-b [&_td]:border-b-[#c8c8c8]">
      {orders.map((order, i) => (
        <tr
          key={order.id}
          className={clsx(
            'h-[17px] [&:nth-child(3n)]:h-[18px]',
            order.icon === 'in' ? 'bg-[#3399ff] text-[#e4f1ff]' : i % 2 ? 'bg-white' : 'bg-[#eaeaea]',
          )}
        >
          <td className="border-r border-[#c8c8c8] p-0 pl-0.5">
            <span className="flex items-center gap-1"><OrderIcon kind={order.icon} />{order.id}</span>
          </td>
          <td className={bodyCell}>{order.time}</td>
          <td className={bodyCell}>{order.type}</td>
          {order.cells ? (
            order.cells.map((cell, n) => <td key={n} className={bodyCell}>{cell}</td>)
          ) : (
            <td colSpan={8} className={bodyCell}>{order.comment}</td>
          )}
          <td className="p-0 pr-0.5 text-right">{order.profit}</td>
        </tr>
      ))}
    </tbody>
    <tfoot>
      <tr className="h-[17px] bg-[#c6c6c6] font-bold text-black">
        <td colSpan={11} className="border-b-2 border-[#888] p-0 pl-[6px] whitespace-pre">
          <span className="flex items-center gap-[6px]">
            <span className="h-[6px] w-[6px] rounded-full border border-[#888]" />
            {'盈/亏: -12 113.48  信用额: 0.00  存款: 24 106.64  取款: -5 450.00'}
          </span>
        </td>
        <td className="border-b-2 border-[#888] p-0 pr-0.5 text-right">6 543.16</td>
      </tr>
    </tfoot>
  </table>
);

// red notes drawn over the history list
const HistoryNotes = () => (
  <svg width="1117" height="230" viewBox="7 350 1117 230" fill="none" stroke="#ee1c24" strokeWidth="2" className="pointer-events-none absolute top-0 left-0">
    <rect x="21.500" y="425.500" width="1095" height="22" strokeWidth="1.500" />
    <rect x="25" y="511" width="1088" height="38.500" />
    <ellipse cx="940" cy="526" rx="24" ry="31" strokeWidth="1.500" />
    <path d="M863 481l56 25" />
    <path d="M929 511l-14.500-.5 6-12z" fill="#ee1c24" stroke="none" />
    <g fill="#ee1c24" stroke="none" fontSize="13">
      <text x="555" y="409">维权赔偿一半6442美金，净亏损4400美金，本应盈利5000美金</text>
      <text x="759" y="483">远超市场的报价</text>
    </g>
  </svg>
);

const Terminal = () => (
  <section className="relative flex pt-[3px] pb-[3px]">
    <div className="flex w-3 shrink-0 flex-col items-center">
      <button type="button" aria-label="关闭终端" className="flex h-[10px] items-center"><CloseMark /></button>
      <div className="flex w-[10px] flex-1 items-end justify-center bg-[#d0deec]">
        <span className="rotate-180 text-[9px] leading-[10px] text-[#555] [writing-mode:vertical-rl]">终端</span>
      </div>
    </div>
    <div className="ml-px min-w-0 flex-1">
      <div className="flex">
        <div className="min-w-0 flex-1"><HistoryTable /></div>
        <div className="flex w-[10px] shrink-0 flex-col overflow-hidden bg-[#f0f0f0] py-[6px] pl-0.5">
          <ScrollArrow />
          <div className="mt-[74px] flex flex-1 flex-col items-center justify-center gap-px rounded-sm border border-[#999] bg-gradient-to-r from-white to-[#d8d8d8]">
            <span className="h-px w-[5px] bg-[#555]" />
            <span className="h-px w-[5px] bg-[#555]" />
            <span className="h-px w-[5px] bg-[#555]" />
          </div>
          <div className="mt-[6px]"><ScrollArrow down /></div>
        </div>
      </div>
      <div role="tablist" className="flex h-5 pl-px text-[10px]">
        {terminalTabs.map((tab, i) =>
          tab.active ? (
            <button key={tab.label} type="button" role="tab" aria-selected="true" className="-mt-px h-[19px] border border-t-0 border-[#333] bg-white px-[7px] leading-[18px] text-[#111]">{tab.label}</button>
          ) : (
            <button
              key={tab.label}
              type="button"
              role="tab"
              aria-selected="false"
              className={clsx('mt-1 flex h-3 px-2 leading-3 text-[#888]', i !== 1 && 'border-r border-[#888]')}
            >
              {tab.label}
              {tab.badge && <span className="mt-1 ml-px text-[8px] leading-[10px] font-bold text-[#ff2a2a]">{tab.badge}</span>}
            </button>
          ),
        )}
      </div>
    </div>
    <HistoryNotes />
  </section>
);

const StatusBar = () => (
  <footer className="flex h-6 shrink-0 items-center border-t border-[#aaa] bg-[#f0f0f0] text-[10px] leading-4 text-[#111]">
    <span className="flex-1 pl-px">交易历史页</span>
    <span className="w-[111px] border-l border-[#aaa] pl-1">Default</span>
    <span className="h-4 w-24 border-l border-[#aaa]" />
    <span className="h-4 w-[68px] border-l border-[#aaa]" />
    <span className="h-4 w-[67px] border-l border-[#aaa]" />
    <span className="h-4 w-16 border-l border-[#aaa]" />
    <span className="h-4 w-[66px] border-l border-[#aaa]" />
    <span className="h-4 w-16 border-l border-[#aaa]" />
    <span className="flex w-[127px] items-center gap-1 border-l border-[#aaa] pl-1">
      <svg width="19" height="12" viewBox="0 0 19 12">
        <path d="M1 0v12M4 0v11M7 0v10M10 0v8M13 0v6M16 0v4" stroke="#6d8f22" strokeWidth="2" />
        <path d="M4 11v1M7 9v3M10 7v5M13 5v7M16 3v9" stroke="#205a80" strokeWidth="2" />
      </svg>
      2949/2 kb
    </span>
  </footer>
);

const App: React.FC = () => {
  return (
    <div className="flex h-screen overflow-hidden bg-[#f0f0f0] font-['Noto_Sans','Noto_Sans_CJK_SC',sans-serif]">
      {/* window edge */}
      <div className="flex w-[7px] shrink-0 justify-end bg-gradient-to-b from-[#3c3c3c] to-[#05080c] to-30%">
        <span className="mt-1 mr-px h-[164px] w-[3px] bg-gradient-to-b from-[#333] to-[#c9c9c9]" />
        <span className="w-px bg-[#8a8f94]" />
      </div>
      <div className="flex min-w-0 flex-1 flex-col">
        <TitleBar />
        <MenuBar />
        <MainToolbar />
        <DrawingToolbar />
        <main className="flex-1">
          <div className="flex">
            <aside className="w-[299px] shrink-0">
              <MarketWatch />
              <Navigator />
            </aside>
            <ChartArea />
          </div>
          <Terminal />
          <StatusBar />
        </main>
      </div>
    </div>
  );
};

export default App;
